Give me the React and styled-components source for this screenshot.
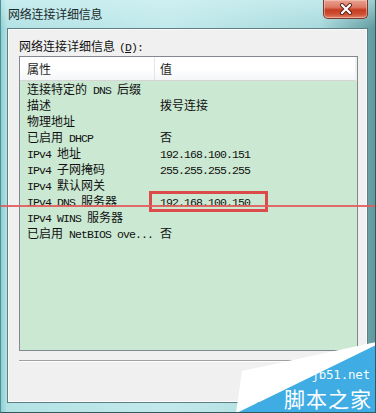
import styled, { createGlobalStyle } from 'styled-components';

const GlobalStyle = createGlobalStyle`
  html, body {
    margin: 0;
    padding: 0;
    background: #ffffff;
  }
  body {
    font-family: "Noto Sans CJK SC", "Liberation Sans", sans-serif;
  }
`;

const Window = styled.div`
  position: relative;
  width: 376px;
  height: 413px;
  overflow: hidden;
  display: flex;
  flex-direction: column;
  box-sizing: border-box;
  border-left: 1px solid #4f8f96;
  border-right: 1px solid #2f5a60;
  border-bottom: 1px solid #2f5a60;
  background:
    linear-gradient(180deg, rgba(215, 245, 246, 0.55) 0, rgba(180, 228, 231, 0) 28px),
    linear-gradient(90deg, #8fd0d4 0, #b3e2e5 6px, #c2e9eb 45%, #a9dadd 85%, #6fa9ae 97%, #5f989e 100%);
`;

const TitleBar = styled.div`
  height: 28px;
  display: flex;
  align-items: flex-start;
  flex-shrink: 0;
`;

const Title = styled.div`
  padding: 6px 0 0 7px;
  font-size: 12px;
  line-height: 16px;
  color: #1c2a2c;
  letter-spacing: -0.2px;
`;

const CloseButton = styled.div`
  margin-left: auto;
  margin-right: 7px;
  width: 45px;
  height: 19px;
  box-sizing: border-box;
  border: 1px solid #7a3a30;
  border-top: none;
  border-radius: 0 0 5px 5px;
  background: linear-gradient(180deg, #e9a293 0, #dc7a64 40%, #c63b22 55%, #cf5235 80%, #e2846a 100%);
  box-shadow: inset 0 0 0 1px rgba(255, 220, 210, 0.45);
  display: flex;
  align-items: center;
  justify-content: center;
`;

const Client = styled.div`
  flex: 1;
  margin: 0 7px 9px 6px;
  border: 1px solid #5d7f84;
  box-shadow: inset 0 0 0 1px #fbfbfb;
  background: #f0f0f0;
  padding: 9px 0 0 11px;
  display: flex;
  flex-direction: column;
`;

const Label = styled.div`
  font-size: 12px;
  line-height: 16px;
  color: #111;
  height: 18px;

  u {
    text-decoration: underline;
  }
`;

const Paren = styled.span`
  font-family: "Liberation Mono", monospace;
  font-size: 11.5px;
  letter-spacing: -0.9px;
  margin-left: 4px;
`;

const ListBox = styled.div`
  width: 339px;
  height: 295px;
  box-sizing: border-box;
  border: 1px solid #828790;
  background: #cbe8d2;
  display: flex;
  flex-direction: column;
`;

const Header = styled.div`
  display: grid;
  grid-template-columns: 135px 1fr;
  height: 24px;
  box-sizing: border-box;
  background: linear-gradient(180deg, #ffffff 0, #ffffff 50%, #f4f6f7 100%);
  border-bottom: 1px solid #d5d5d5;
  border-right: 2px solid #f0f0f0;
`;

const HeaderCell = styled.div`
  font-size: 12px;
  line-height: 23px;
  color: #1e1e1e;
  padding-left: ${(p) => (p.$first ? '7px' : '5px')};
  border-right: ${(p) => (p.$first ? '1px solid #e3e5e7' : 'none')};
`;

const Row = styled.div`
  display: grid;
  grid-template-columns: 135px 1fr;
  height: 16px;
`;

const Cell = styled.div`
  position: relative;
  padding-left: ${(p) => (p.$first ? '7px' : '5px')};
  font-size: 12px;
  line-height: 16px;
  color: #111;
  white-space: pre;

  ${(p) =>
    p.$marked &&
    `
    &::after {
      content: '';
      position: absolute;
      left: -6px;
      top: -2px;
      width: 119px;
      height: 21px;
      box-sizing: border-box;
      border: 3px solid rgba(222, 58, 58, 0.9);
    }
  `}
`;

const Cjk = styled.span`
  font-family: "Noto Sans CJK SC", sans-serif;
  font-size: 12px;
`;

const Mono = styled.span`
  font-family: "Liberation Mono", "DejaVu Sans Mono", monospace;
  font-size: 11.5px;
  letter-spacing: -0.9px;
`;

const Separator = styled.div`
  width: 340px;
  margin-top: 9px;
  height: 1px;
  background: #a0a0a0;
  border-bottom: 1px solid #ffffff;
`;

const RedLine = styled.div`
  position: absolute;
  left: 0;
  right: 0;
  top: 205px;
  height: 2px;
  background: rgba(226, 92, 92, 0.9);
`;

const Watermark = styled.div`
  position: absolute;
  right: -1px;
  bottom: -1px;
  width: 140px;
  height: 71px;
`;

const WatermarkText = styled.div`
  position: absolute;
  right: 4px;
  bottom: 3px;
  display: flex;
  flex-direction: column;
  align-items: flex-end;
  gap: 4px;
  color: #ffffff;
`;

const WatermarkSite = styled.div`
  margin-right: 2px;
  font-family: "DejaVu Sans Mono", monospace;
  font-size: 12.5px;
  line-height: 14px;
  color: #f2fbff;
  letter-spacing: -0.2px;
`;

const WatermarkName = styled.div`
  font-family: "Noto Sans CJK SC", sans-serif;
  font-size: 21px;
  line-height: 24px;
  letter-spacing: 1px;
`;

const rows = [
  ['连接特定的 DNS 后缀', ''],
  ['描述', '拨号连接'],
  ['物理地址', ''],
  ['已启用 DHCP', '否'],
  ['IPv4 地址', '192.168.100.151'],
  ['IPv4 子网掩码', '255.255.255.255'],
  ['IPv4 默认网关', ''],
  ['IPv4 DNS 服务器', '192.168.100.150', true],
  ['IPv4 WINS 服务器', ''],
  ['已启用 NetBIOS ove...', '否'],
];

function MixedText({ text }) {
  return text
    .split(/([\u3000-\u9fff]+)/)
    .filter(Boolean)
    .map((part, i) =>
      /[\u3000-\u9fff]/.test(part) ? <Cjk key={i}>{part}</Cjk> : <Mono key={i}>{part}</Mono>
    );
}

export default function App() {
  return (
    <>
      <GlobalStyle />
      <Window>
        <TitleBar>
          <Title>网络连接详细信息</Title>
          <CloseButton>
            <svg width="14" height="12" viewBox="0 0 14 12">
              <path
                d="M3 2 L11 10 M11 2 L3 10"
                stroke="#5a2218"
                strokeWidth="4"
                strokeLinecap="round"
              />
              <path
                d="M3 2 L11 10 M11 2 L3 10"
                stroke="#ffffff"
                strokeWidth="2.2"
                strokeLinecap="round"
              />
            </svg>
          </CloseButton>
        </TitleBar>
        <Client>
          <Label>
            网络连接详细信息
            <Paren>
              (<u>D</u>):
            </Paren>
          </Label>
          <ListBox>
            <Header>
              <HeaderCell $first>属性</HeaderCell>
              <HeaderCell>值</HeaderCell>
            </Header>
            {rows.map(([name, value, marked]) => (
              <Row key={name}>
                <Cell $first>
                  <MixedText text={name} />
                </Cell>
                <Cell $marked={marked}>
                  <MixedText text={value} />
                </Cell>
              </Row>
            ))}
          </ListBox>
          <Separator />
        </Client>
        <RedLine />
        <Watermark>
          <svg width="140" height="71" viewBox="0 0 140 71">
            <polygon points="0,71 6,29 140,0 140,4" fill="#ffffff" />
            <polygon points="1,71 140,3 140,71" fill="#3fade3" />
          </svg>
          <WatermarkText>
            <WatermarkSite>jb51.net</WatermarkSite>
            <WatermarkName>脚本之家</WatermarkName>
          </WatermarkText>
        </Watermark>
      </Window>
    </>
  );
}
